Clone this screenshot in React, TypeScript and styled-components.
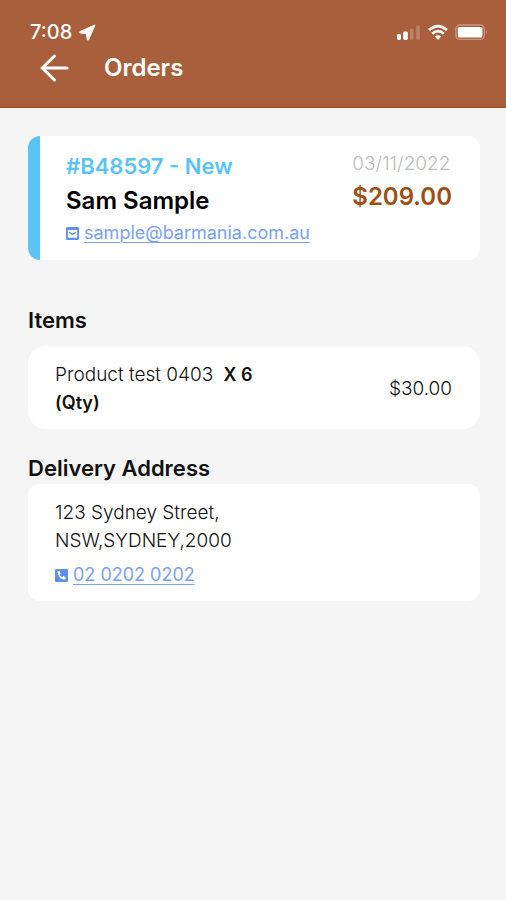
import React from "react";
import styled, { createGlobalStyle } from "styled-components";

const GlobalStyle = createGlobalStyle`
  * { box-sizing: border-box; }
  body {
    margin: 0;
    background: #f5f5f5;
    color: #111;
    font-family: Inter, "Liberation Sans", sans-serif;
  }
  h1, h2, p { margin: 0; }
`;

const Header = styled.header`
  background: #a95f3c;
  border-bottom: 1px solid #a1501a;
  color: #fff;
  padding: 20px 18px 23px 30px;
`;

const StatusBar = styled.div`
  display: flex;
  align-items: center;
  justify-content: space-between;
  height: 24px;
`;

const StatusGroup = styled.div<{ $gap: number }>`
  display: flex;
  align-items: center;
  gap: ${(p) => p.$gap}px;
`;

const Clock = styled.span`
  font-size: 20px;
  line-height: 24px;
  font-weight: 500;
`;

const NavBar = styled.nav`
  display: flex;
  align-items: center;
  gap: 35px;
  height: 40px;
  padding: 8px 0 0 10px;
`;

const BackButton = styled.button`
  display: flex;
  padding: 0;
  border: 0;
  background: none;
  color: inherit;
  cursor: pointer;
`;

const Title = styled.h1`
  font-size: 24px;
  line-height: 32px;
  font-weight: 600;
`;

const Content = styled.main`
  padding: 28px 26px 28px 28px;
`;

const Card = styled.section<{ $radius: number }>`
  background: #fff;
  border-radius: ${(p) => p.$radius}px;
  padding: 15px 28px 12px 27px;
`;

const OrderCard = styled(Card)`
  display: flex;
  justify-content: space-between;
  border-left: 12px solid #5ac4f8;
  padding: 14px 28px 13px 26px;
`;

const CardColumn = styled.div`
  display: flex;
  flex-direction: column;
`;

const OrderNumber = styled.p`
  color: #5cc3f5;
  font-size: 22px;
  line-height: 32px;
  font-weight: 600;
  margin-bottom: 1px;
`;

const Customer = styled.h2`
  color: #000;
  font-size: 24px;
  line-height: 36px;
  font-weight: 600;
`;

const OrderDate = styled.p`
  color: #bdbdbd;
  font-size: 19px;
  line-height: 28px;
  font-weight: 300;
  margin-bottom: 1px;
`;

const Total = styled.p`
  color: #a04e14;
  font-size: 24px;
  line-height: 36px;
  font-weight: 600;
`;

const ContactLink = styled.a<{ $before?: number }>`
  display: flex;
  align-items: center;
  gap: 5px;
  margin-top: ${(p) => p.$before ?? 0}px;
  color: #7ba2f0;
  font-size: 18px;
  line-height: 28px;
  font-weight: 400;
  text-decoration: none;

  span {
    text-decoration: underline;
    text-decoration-thickness: 1px;
    text-underline-offset: 3px;
  }
`;

const SectionTitle = styled.h2<{ $before: number; $after: number }>`
  font-size: 22px;
  line-height: 28px;
  font-weight: 600;
  margin: ${(p) => p.$before}px 0 ${(p) => p.$after}px;
`;

const ItemCard = styled(Card)`
  display: flex;
  align-items: center;
  justify-content: space-between;
`;

const BodyText = styled.p`
  font-size: 19px;
  line-height: 28px;
  font-weight: 300;
`;

const ItemName = styled(BodyText)`
  max-width: 220px;
`;

const Quantity = styled.strong`
  font-size: 18px;
  font-weight: 600;
`;

const ProductName = styled.span`
  margin-right: 5px;
`;

const LocationIcon = () => (
  <svg width="17" height="17" viewBox="0 0 17 17" fill="currentColor" aria-hidden="true">
    <path d="M15.8 1.2 1.2 7.6q-.9.8.4 1.4L7.6 9.6l.7 5.8q.6 1 1.3.1Z" stroke="currentColor" strokeWidth="1.2" strokeLinejoin="round" />
  </svg>
);

const SignalIcon = () => (
  <svg width="24" height="17" viewBox="0 0 24 17" fill="currentColor" aria-hidden="true">
    <rect x="0" y="10" width="4" height="6" rx="1.4" />
    <rect x="6.2" y="7.5" width="4.6" height="8.5" rx="1.4" />
    <rect x="13" y="4.5" width="3.6" height="11.5" rx="1.4" opacity=".22" />
    <rect x="19.2" y="1.5" width="3.6" height="14.5" rx="1.4" opacity=".22" />
  </svg>
);

const WifiIcon = () => (
  <svg width="20" height="17" viewBox="0 0 20 17" fill="none" stroke="currentColor" strokeWidth="2.7" aria-hidden="true">
    <path d="M1 6.1q9-7.9 18 0" />
    <path d="M4.2 9.7q5.8-5 11.6 0" />
    <path d="m6.8 12.4q3.2-2.4 6.4 0L10 16Z" fill="currentColor" stroke="none" />
  </svg>
);

const BatteryIcon = () => (
  <svg width="33" height="17" viewBox="0 0 33 17" aria-hidden="true">
    <rect x=".9" y="1" width="28.4" height="14.4" rx="4" fill="none" stroke="#fff" strokeOpacity=".35" strokeWidth="1.4" />
    <rect x="2.8" y="3" width="24.6" height="10.6" rx="1.6" fill="#fff" />
    <path d="M31 6q1.7 2.4 0 4.8Z" fill="#fff" fillOpacity=".5" />
  </svg>
);

const BackIcon = () => (
  <svg width="29" height="28" viewBox="0 0 29 28" fill="none" stroke="currentColor" strokeWidth="3" strokeLinecap="round" strokeLinejoin="round" aria-hidden="true">
    <path d="M27 14H2M14.5 2 2.3 14l12.2 12" />
  </svg>
);

const MailIcon = () => (
  <svg width="13" height="13" viewBox="0 0 13 13" fill="none" aria-hidden="true">
    <rect x=".9" y=".9" width="11.2" height="11.2" rx=".6" stroke="#5c8fe8" strokeWidth="1.8" />
    <path d="M1 1h11v1.6H1ZM1 11.2h11" fill="#5c8fe8" stroke="#5c8fe8" />
    <path d="m3 5.2 3.5 2.2L10 5.2" stroke="#5c8fe8" strokeWidth="1.3" />
  </svg>
);

const PhoneIcon = () => (
  <svg width="13" height="13" viewBox="0 0 13 13" aria-hidden="true">
    <rect width="13" height="13" rx="1" fill="#5c8fe8" />
    <path d="M2.3 2.4 4.6 2l1 2.6-1 1q.8 1.7 2.7 2.6l1-1.1 2.5 1.1-.3 2.2Q4 11.2 2.3 2.4Z" fill="#fff" />
  </svg>
);

export default function App() {
  return (
    <>
      <GlobalStyle />
      <Header>
        <StatusBar>
          <StatusGroup $gap={7}>
            <Clock>7:08</Clock>
            <LocationIcon />
          </StatusGroup>
          <StatusGroup $gap={7}>
            <SignalIcon />
            <WifiIcon />
            <BatteryIcon />
          </StatusGroup>
        </StatusBar>
        <NavBar>
          <BackButton type="button" aria-label="Back">
            <BackIcon />
          </BackButton>
          <Title>Orders</Title>
        </NavBar>
      </Header>
      <Content>
        <OrderCard $radius={12}>
          <CardColumn>
            <OrderNumber>#B48597 - New</OrderNumber>
            <Customer>Sam Sample</Customer>
            <ContactLink href="mailto:sample@barmania.com.au">
              <MailIcon />
              <span>sample@barmania.com.au</span>
            </ContactLink>
          </CardColumn>
          <CardColumn>
            <OrderDate>03/11/2022</OrderDate>
            <Total>$209.00</Total>
          </CardColumn>
        </OrderCard>
        <SectionTitle $before={46} $after={12}>Items</SectionTitle>
        <ItemCard $radius={18}>
          <ItemName>
            <ProductName>Product test 0403</ProductName>{" "}
            <Quantity>X 6</Quantity>{" "}
            <Quantity>(Qty)</Quantity>
          </ItemName>
          <BodyText>$30.00</BodyText>
        </ItemCard>
        <SectionTitle $before={25} $after={2}>Delivery Address</SectionTitle>
        <Card $radius={12}>
          <BodyText>123 Sydney Street,</BodyText>
          <BodyText>NSW,SYDNEY,2000</BodyText>
          <ContactLink $before={6} href="tel:0202020202">
            <PhoneIcon />
            <span>02 0202 0202</span>
          </ContactLink>
        </Card>
      </Content>
    </>
  );
}
